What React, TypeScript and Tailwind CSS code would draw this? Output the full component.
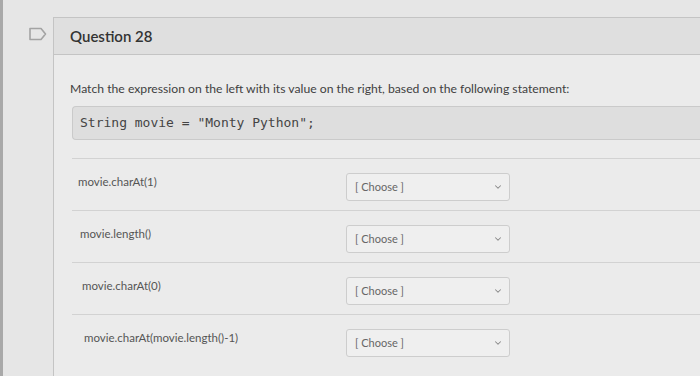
import { ChevronDown } from 'lucide-react'

const rows = [
  'movie.charAt(1)',
  'movie.length()',
  'movie.charAt(0)',
  'movie.charAt(movie.length()-1)',
]

export default function App() {
  return (
    <div className="w-[700px] h-[376px] overflow-hidden flex bg-[#e6e6e6] font-['Lato','Noto_Sans',sans-serif] text-[#444]">
      {/* left gutter */}
      <div className="w-[3px] bg-[#a9a9a9]" />
      <div className="w-[50px] pt-[27px] pl-[26px]">
        <svg width="18" height="14" viewBox="0 0 18 14" fill="none">
          <path d="M1 1.5 H12 L16.5 7 L12 12.5 H1 Z" stroke="#a3a3a3" strokeWidth="1.6" strokeLinejoin="round" />
        </svg>
      </div>

      {/* question box */}
      <div className="flex-1 mt-[17px] border-l border-t border-[#c4c4c4] bg-[#ebebeb] flex flex-col">
        <div className="h-[37px] bg-[#dfdfdf] border-b border-[#c4c4c4] pl-[16px] flex items-center">
          <h2 className="text-[15px] font-semibold text-[#333]">Question 28</h2>
        </div>

        <div className="pt-[25px] pl-[16px] flex flex-col">
          <p className="text-[12.2px] leading-[18px] text-[#3f3f3f]">
            Match the expression on the left with its value on the right, based on the following statement:
          </p>
          <div className="mt-[8px] ml-[2px] h-[34px] bg-[#dedede] border border-[#cacaca] rounded-l-[4px] border-r-0 flex items-center pl-[7px]">
            <code className="font-['DejaVu_Sans_Mono',monospace] text-[13px] text-[#444]">
              String movie = "Monty Python";
            </code>
          </div>

          <div className="mt-[18px] ml-[2px] flex flex-col">
            {rows.map((label, i) => (
              <div
                key={label}
                className={`flex items-start border-t border-[#d2d2d2] pt-[14px] ${i === rows.length - 1 ? 'h-[60px]' : 'h-[52px]'}`}
              >
                <div className="w-[274px] pt-[1px] text-[11.5px] leading-[16px] text-[#555]" style={{ paddingLeft: 6 + i * 2 }}>
                  {label}
                </div>
                <div className="w-[164px] h-[28px] border border-[#cdcdcd] rounded-[3px] bg-[#efefef] flex items-center justify-between pl-[8px] pr-[6px]">
                  <span className="text-[11px] text-[#666]">[ Choose ]</span>
                  <ChevronDown className="w-[10px] h-[10px] text-[#888]" strokeWidth={2.5} />
                </div>
              </div>
            ))}
          </div>
        </div>
      </div>
    </div>
  )
}
